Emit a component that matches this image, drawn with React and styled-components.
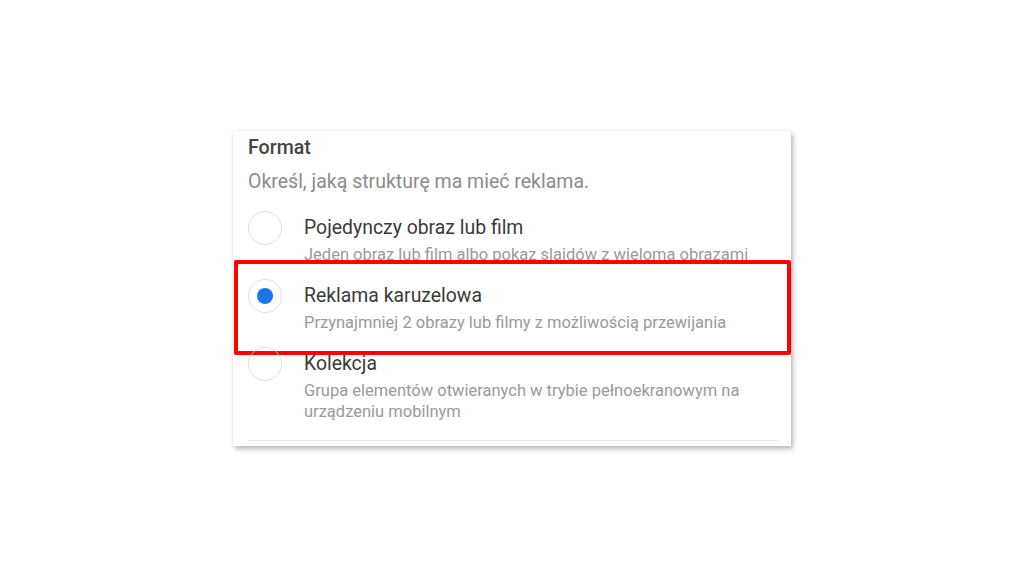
import React from "react";
import styled, { createGlobalStyle } from "styled-components";

const Global = createGlobalStyle`
  html, body { margin: 0; padding: 0; background: #ffffff; }
  body { font-family: Roboto, "Noto Sans", Arial, sans-serif; }
`;

const Page = styled.div`
  width: 1024px;
  height: 576px;
  display: flex;
  align-items: center;
  justify-content: center;
`;

const Card = styled.section`
  width: 558px;
  height: 315px;
  box-sizing: border-box;
  padding: 5px 13px 5px 15px;
  background: #fff;
  box-shadow: 2px 3px 5px rgba(0, 0, 0, 0.28), 0 0 2px rgba(0, 0, 0, 0.06);
  display: flex;
  flex-direction: column;
`;

const Title = styled.h2`
  margin: 0;
  font-size: 19.6px;
  line-height: 24px;
  font-weight: 500;
  color: #444;
`;

const Subtitle = styled.p`
  margin: 10px 0 20px;
  font-size: 19.5px;
  line-height: 24px;
  color: #8c8c8c;
`;

const Options = styled.div`
  display: flex;
  flex-direction: column;
  gap: 17px;
`;

const Option = styled.label`
  position: relative;
  display: grid;
  grid-template-columns: 56px 1fr;
  align-items: start;
`;

const Radio = styled.span`
  width: 34px;
  height: 34px;
  margin-top: -3px;
  box-sizing: border-box;
  border-radius: 50%;
  border: 1.5px solid #e0e0e0;
  display: flex;
  align-items: center;
  justify-content: center;
  &::after {
    content: "";
    width: 16px;
    height: 16px;
    border-radius: 50%;
    background: ${(p) => (p.$checked ? "#1c74e9" : "transparent")};
  }
`;

const OptionText = styled.div`
  display: flex;
  flex-direction: column;
`;

const OptionTitle = styled.span`
  font-size: 19.4px;
  line-height: 28px;
  color: #3a3a3a;
`;

const OptionDesc = styled.span`
  margin-top: 2px;
  font-size: 16.5px;
  line-height: 21px;
  color: #9a9a9a;
`;

const Highlight = styled.div`
  position: absolute;
  left: -14px;
  right: -13px;
  top: -22px;
  bottom: -22px;
  border: 4px solid #ff0000;
  border-radius: 2px;
  pointer-events: none;
`;

const Divider = styled.hr`
  margin: 18px 0 0;
  border: 0;
  border-top: 1px solid #e6e6e6;
`;

const options = [
  {
    title: "Pojedynczy obraz lub film",
    desc: "Jeden obraz lub film albo pokaz slajdów z wieloma obrazami",
  },
  {
    title: "Reklama karuzelowa",
    desc: "Przynajmniej 2 obrazy lub filmy z możliwością przewijania",
    checked: true,
  },
  {
    title: "Kolekcja",
    desc: "Grupa elementów otwieranych w trybie pełnoekranowym na urządzeniu mobilnym",
  },
];

export default function App() {
  return (
    <>
      <Global />
      <Page>
        <Card>
          <Title>Format</Title>
          <Subtitle>Określ, jaką strukturę ma mieć reklama.</Subtitle>
          <Options>
            {options.map((o) => (
              <Option key={o.title}>
                <Radio $checked={o.checked} />
                <OptionText>
                  <OptionTitle>{o.title}</OptionTitle>
                  <OptionDesc>{o.desc}</OptionDesc>
                </OptionText>
                {o.checked && <Highlight />}
              </Option>
            ))}
          </Options>
          <Divider />
        </Card>
      </Page>
    </>
  );
}
